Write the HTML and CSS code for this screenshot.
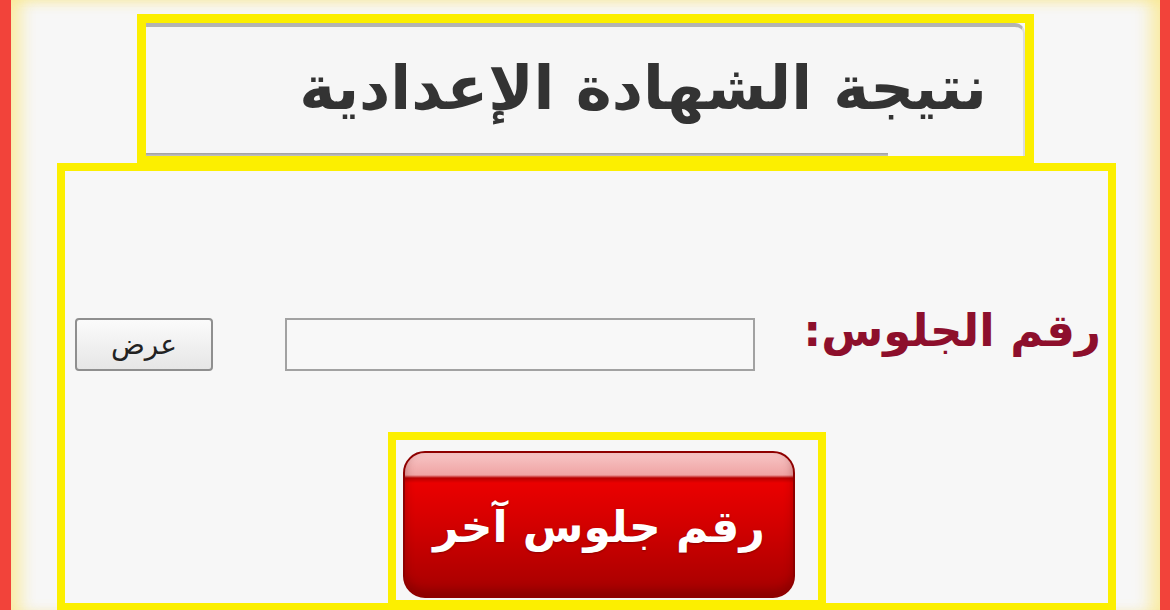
FILE: index.html
```html
<!DOCTYPE html>
<html lang="ar">
<head>
<meta charset="utf-8">
<title>نتيجة الشهادة الإعدادية</title>
<link rel="stylesheet" href="styles.css">
</head>
<body>
<div class="page">
  <header class="title-box">
    <div class="title-panel">
      <h1 class="title">نتيجة الشهادة الإعدادية</h1>
    </div>
  </header>
  <main class="main-box">
    <form class="search-row" onsubmit="return false">
      <button class="show-btn" type="submit">عرض</button>
      <input class="seat-input" type="text" aria-label="رقم الجلوس">
      <label class="seat-label">رقم الجلوس:</label>
    </form>
    <div class="again-frame">
      <a class="again-btn" href="#">رقم جلوس آخر</a>
    </div>
  </main>
</div>
</body>
</html>
```

FILE: styles.css
```css
html, body {
  margin: 0;
  padding: 0;
  height: 100%;
  overflow: hidden;
}

body {
  font-family: "DejaVu Sans", "Noto Sans", sans-serif;
  background: #f7f7f7;
}

.page {
  box-sizing: border-box;
  height: 610px;
  border-left: 11px solid #f2433a;
  border-right: 10px solid #f2433a;
  background: #f7f7f7;
  box-shadow: inset 18px 0 16px -8px rgba(250, 232, 140, 0.75),
              inset -18px 0 16px -8px rgba(250, 232, 140, 0.75),
              inset 0 10px 12px -6px rgba(250, 236, 160, 0.6);
  padding-top: 14px;
  display: flex;
  flex-direction: column;
}

/* heading card */
.title-box {
  box-sizing: border-box;
  width: 897px;
  height: 151px;
  margin-left: 126px;
  border: 9px solid #fcef00;
  background: #f6f6f6;
}

.title-panel {
  position: relative;
  box-sizing: border-box;
  height: 100%;
  border-top: 4px solid #b3b3b3;
  border-top-right-radius: 10px;
  border-right: 2px solid #dcdcdc;
  display: flex;
  align-items: center;
  justify-content: flex-end;
  padding-right: 36px;
  padding-bottom: 8px;
}

.title-panel::after {
  content: "";
  position: absolute;
  left: 0;
  bottom: 0;
  width: 742px;
  height: 3px;
  background: linear-gradient(#9e9e9e, #c4c4c4);
}

.title {
  margin: 0;
  direction: rtl;
  font-size: 61px;
  font-weight: bold;
  color: #333333;
}

/* search card */
.main-box {
  box-sizing: border-box;
  width: 1059px;
  height: 448px;
  margin-left: 46px;
  margin-top: -2px;
  border: 8px solid #fcef00;
  border-bottom-width: 7px;
  background: #f7f7f7;
  display: flex;
  flex-direction: column;
}

.search-row {
  display: flex;
  align-items: center;
  margin: 147px 0 0 0;
  padding-left: 10px;
  padding-right: 7px;
  height: 53px;
}

.show-btn {
  box-sizing: border-box;
  width: 138px;
  height: 53px;
  border: 2px solid #8f8f8f;
  border-radius: 4px;
  background: linear-gradient(#fbfbfb, #e6e6e6);
  font-family: "DejaVu Sans", sans-serif;
  font-size: 28px;
  color: #222;
  direction: rtl;
  padding: 0;
}

.seat-input {
  box-sizing: border-box;
  width: 470px;
  height: 53px;
  margin-left: 72px;
  border: 2px solid #a2a2a2;
  background: #f8f8f8;
}

.seat-label {
  margin-left: auto;
  direction: rtl;
  font-size: 45px;
  font-weight: bold;
  color: #8d0f2c;
  margin-top: -28px;
}

.again-frame {
  box-sizing: border-box;
  width: 438px;
  flex: 1;
  margin: 61px 0 0 323px;
  border: 8px solid #fcef00;
  border-bottom: 3px solid #fcef00;
  background: #f7f7f7;
  padding: 11px 23px 2px 7px;
  display: flex;
}

.again-btn {
  flex: 1;
  box-sizing: border-box;
  border-radius: 22px;
  border: 2px solid #8e0000;
  background:
    linear-gradient(#f7c6c6 0, #f0a4a4 22px, #b80000 25px, #ea0000 30px, #d40000 70px, #a50000 100%);
  box-shadow: inset 0 -6px 10px rgba(90, 0, 0, 0.35);
  color: #fff;
  text-decoration: none;
  direction: rtl;
  font-size: 44px;
  font-weight: bold;
  display: flex;
  align-items: center;
  justify-content: center;
  padding-top: 4px;
  text-shadow: 0 1px 2px rgba(80, 0, 0, 0.5);
}
```
